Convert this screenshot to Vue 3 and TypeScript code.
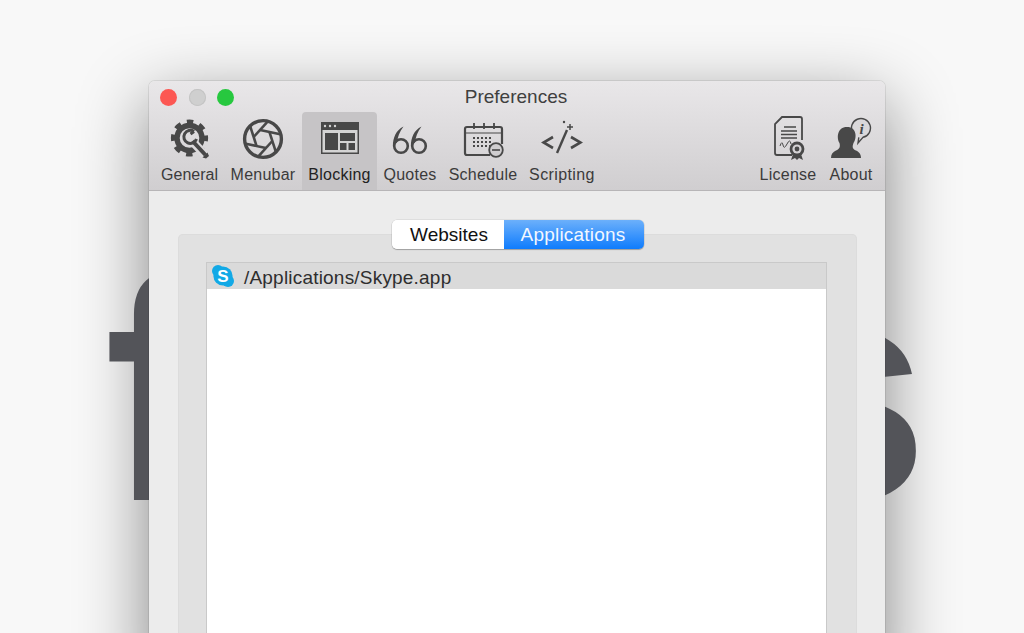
<template>
  <div class="desktop">
    <div class="window-shadow"></div>
    <div class="wordmark">focus</div>

    <div class="window">
      <header class="titlebar">
        <div class="title-row">
          <div class="lights">
            <span class="light red"></span>
            <span class="light grey"></span>
            <span class="light green"></span>
          </div>
          <div class="title">Preferences</div>
        </div>

        <nav class="tabs">
          <div class="tab general">
            <svg class="icon" width="44" height="50" viewBox="0 0 44 50">
              <circle cx="21.5" cy="24" r="12.5" fill="none" stroke="#484848" stroke-width="5.4" />
              <circle cx="21.5" cy="24" r="16.5" fill="none" stroke="#484848" stroke-width="4.2" stroke-dasharray="6.5 6.46" stroke-dashoffset="3.2" />
              <path d="M25 28 L39 43" stroke="#dcdadc" stroke-width="8.5" />
              <path d="M24.5 27 L37.5 41" stroke="#484848" stroke-width="4" />
              <path d="M26 17.5 L22.5 20 M26 17.5 A6.5 6.5 0 1 0 28.5 25" fill="none" stroke="#484848" stroke-width="3" />
              <path d="M39.5 38.5 L41 42 L38 44.5 L34.5 43.5 L37 41Z" fill="#484848" />
            </svg>
            <span>General</span>
          </div>

          <div class="tab menubar">
            <svg class="icon" width="44" height="50" viewBox="0 0 44 50">
              <circle cx="22" cy="25" r="18.4" fill="none" stroke="#484848" stroke-width="3.4" />
              <path v-for="(d, i) in apertureBlades" :key="i" :d="d" stroke="#484848" stroke-width="2.6" fill="none" />
            </svg>
            <span>Menubar</span>
          </div>

          <div class="tab blocking active">
            <svg class="icon" width="40" height="50" viewBox="0 0 40 50">
              <rect x="1" y="8" width="38" height="32" fill="#484848" />
              <rect x="2.5" y="16" width="35" height="22.5" fill="#d4d4d4" />
              <rect x="5" y="19" width="13" height="17" fill="#484848" />
              <rect x="20" y="19" width="15" height="8" fill="#484848" />
              <rect x="20" y="29" width="6.5" height="7" fill="#484848" />
              <rect x="28.5" y="29" width="6.5" height="7" fill="#484848" />
              <circle cx="5" cy="12" r="1.2" fill="#d4d4d4" />
              <circle cx="10" cy="12" r="1.2" fill="#d4d4d4" />
              <circle cx="15" cy="12" r="1.2" fill="#d4d4d4" />
            </svg>
            <span>Blocking</span>
          </div>

          <div class="tab quotes">
            <svg class="icon" width="38" height="50" viewBox="0 0 38 50">
              <circle cx="10" cy="32" r="6.8" fill="none" stroke="#484848" stroke-width="2.6" />
              <path d="M1.9 32 C1.9 24 5 16 12.5 12.5 C8.5 18 6.4 23 6.4 28Z" fill="#484848" />
              <circle cx="28" cy="32" r="6.8" fill="none" stroke="#484848" stroke-width="2.6" />
              <path d="M19.9 32 C19.9 24 23 16 30.5 12.5 C26.5 18 24.4 23 24.4 28Z" fill="#484848" />
            </svg>
            <span>Quotes</span>
          </div>

          <div class="tab schedule">
            <svg class="icon" width="42" height="50" viewBox="0 0 42 50">
              <path d="M28 41 H5 Q3 41 3 39 V15 Q3 13 5 13 H38 Q40 13 40 15 V30" fill="none" stroke="#484848" stroke-width="2.2" />
              <path d="M3 19 H40" stroke="#484848" stroke-width="1.2" />
              <path d="M12 9 V15 M22 9 V15 M32 9 V15" stroke="#484848" stroke-width="1.8" />
              <g fill="#484848">
                <template v-for="y in [23, 27, 31]" :key="y">
                  <rect v-for="x in [11, 15, 19, 23, 27]" :key="x" :x="x" :y="y" width="2" height="2" />
                </template>
              </g>
              <circle cx="34" cy="36" r="6.8" fill="#cfcdcf" stroke="#484848" stroke-width="1.8" />
              <path d="M30 36 H38" stroke="#484848" stroke-width="1.6" />
            </svg>
            <span>Schedule</span>
          </div>

          <div class="tab scripting">
            <svg class="icon" width="42" height="50" viewBox="0 0 42 50">
              <path d="M12 23 L2.5 28.5 L12 34 M30 23 L39.5 28.5 L30 34" fill="none" stroke="#484848" stroke-width="2.6" />
              <path d="M26 16 L16 39" stroke="#484848" stroke-width="2.4" />
              <path d="M29 10 V16 M26 13 H32" stroke="#484848" stroke-width="1.5" />
              <circle cx="23" cy="8" r="1.2" fill="#484848" />
            </svg>
            <span>Scripting</span>
          </div>

          <div class="tab license">
            <svg class="icon" width="36" height="50" viewBox="0 0 36 50">
              <path d="M22 41 H7 Q5 41 5 39 V10 L12 3 H30 Q32 3 32 5 V26" fill="none" stroke="#484848" stroke-width="1.8" />
              <path d="M14 13 H26 M11 17 H27 M11 20.5 H27 M11 24 H27" stroke="#484848" stroke-width="1.4" />
              <path d="M10 32 Q12 26 13 31 T17 30 T21 30" fill="none" stroke="#484848" stroke-width="1" />
              <path d="M23 40 L21 46 L25 44 L27 46 L29 44 L33 46 L31 40Z" fill="#484848" />
              <circle cx="27" cy="35" r="7.4" fill="#484848" />
              <circle cx="27" cy="35" r="4.6" fill="#d4d2d4" />
              <circle cx="27" cy="35" r="2.4" fill="#484848" />
            </svg>
            <span>License</span>
          </div>

          <div class="tab about">
            <svg class="icon" width="42" height="50" viewBox="0 0 42 50">
              <path d="M22.6 18.5 A9.5 9.5 0 1 1 33 23.3 L28 29 L28.8 23.3" fill="#dad8da" stroke="#484848" stroke-width="1.4" />
              <path d="M17 13 C7 13 6.5 24 9.5 29 C10.5 33 9.5 35 6 36.5 C3 38 1 40 1 44 H31 C31 40 29 38 26 36.5 C22.5 35 22 33 23.5 29 C27 24 27 13 17 13Z" fill="#484848" />
              <text x="29.5" y="19.5" class="info">i</text>
            </svg>
            <span>About</span>
          </div>
        </nav>
      </header>

      <main class="content">
        <div class="segmented">
          <button class="segment">Websites</button>
          <button class="segment on">Applications</button>
        </div>
        <section class="panel">
          <div class="list">
            <div class="row">
              <svg class="skype" width="24" height="24" viewBox="0 0 24 24">
                <circle cx="12" cy="12" r="9.6" fill="#12a9e6" />
                <circle cx="7" cy="7" r="6" fill="#12a9e6" />
                <circle cx="17" cy="17" r="6" fill="#12a9e6" />
                <text x="12" y="18" class="skype-s">S</text>
              </svg>
              <span>/Applications/Skype.app</span>
            </div>
          </div>
        </section>
      </main>
    </div>
  </div>
</template>

<script setup lang="ts">
// six blades of the shutter, each running along one side of the inner hexagon out to the rim
const apertureBlades: string[] = Array.from({ length: 6 }, (_, k) => {
  const rad = (deg: number) => (deg * Math.PI) / 180
  const a = rad(k * 60 + 12)
  const b = rad(k * 60 + 72)
  const x1 = 22 + 9.5 * Math.cos(a)
  const y1 = 25 + 9.5 * Math.sin(a)
  const x2 = 22 + 9.5 * Math.cos(b)
  const y2 = 25 + 9.5 * Math.sin(b)
  const ex = x2 + (x2 - x1) * 1.3
  const ey = y2 + (y2 - y1) * 1.3
  return `M${x1.toFixed(1)} ${y1.toFixed(1)} L${ex.toFixed(1)} ${ey.toFixed(1)}`
})
</script>

<style>
html,
body {
  margin: 0;
  height: 100%;
  overflow: hidden;
  background: #f8f8f8;
}
</style>

<style scoped>
.desktop {
  position: relative;
  height: 633px;
  overflow: hidden;
  background: #f8f8f8;
  font-family: "Liberation Sans", Arial, sans-serif;
}

/* the big word sits on top of the shadow but under the window */
.window-shadow {
  position: absolute;
  left: 149px;
  top: 81px;
  width: 736px;
  height: 600px;
  border-radius: 6px 6px 0 0;
  box-shadow: 0 22px 70px rgba(0, 0, 0, 0.48);
}

.wordmark {
  position: absolute;
  left: 104px;
  top: 204px;
  font-size: 318px;
  font-weight: 700;
  line-height: 372px;
  letter-spacing: -5.8px;
  color: #535459;
}

.window {
  position: relative;
  width: 736px;
  height: 600px;
  margin: 81px 0 0 149px;
  border-radius: 6px 6px 0 0;
  background: #ececec;
  box-shadow: 0 0 0 1px rgba(0, 0, 0, 0.08);
}

.titlebar {
  height: 110px;
  box-sizing: border-box;
  border-bottom: 1px solid #b7b5b7;
  border-radius: 6px 6px 0 0;
  background: linear-gradient(#e9e7e9, #d0ced0);
}

.title-row {
  display: grid;
  grid-template-columns: 1fr auto 1fr;
  align-items: center;
  height: 31px;
  box-sizing: border-box;
  padding: 1px 11px 0;
}

.lights {
  display: flex;
  gap: 11.5px;
}

.light {
  width: 17px;
  height: 17px;
  border-radius: 50%;
}

.red {
  background: #fc5753;
}

.grey {
  background: #cfcfcf;
  box-shadow: inset 0 0 0 1px #c4c4c4;
}

.green {
  background: #27c83f;
}

.title {
  grid-column: 2;
  position: relative;
  left: -1px;
  font-size: 19px;
  color: #3f3f3f;
}

.tabs {
  display: flex;
  height: 78px;
  padding: 0 6px;
}

.tab {
  display: flex;
  flex-direction: column;
  align-items: center;
  border-radius: 4px 4px 0 0;
  font-size: 16px;
  letter-spacing: 0.25px;
  white-space: nowrap;
  color: #3b3b3b;
}

.general {
  width: 69px;
  letter-spacing: 0;
}

.menubar {
  width: 78px;
}

.blocking {
  width: 75px;
}

.quotes {
  width: 66px;
}

.schedule {
  width: 80px;
}

.scripting {
  width: 78px;
  letter-spacing: 0.4px;
}

.license {
  width: 70px;
  margin-left: auto;
}

.about {
  width: 56px;
}

.tab.active {
  background: #c6c4c6;
  color: #222;
}

.icon {
  display: block;
  margin: 2px 0 2px;
}

.info {
  font-family: "Liberation Serif", serif;
  font-style: italic;
  font-weight: 700;
  font-size: 15px;
  fill: #484848;
}

.content {
  padding-top: 29px;
}

.segmented {
  display: flex;
  width: 252px;
  height: 29px;
  margin: 0 auto -15px;
  position: relative;
  left: 1px;
  box-shadow: 0 1px 1px rgba(0, 0, 0, 0.25), 0 0 0 0.5px rgba(0, 0, 0, 0.12);
  border-radius: 5px;
}

.segment {
  flex: 1 1 auto;
  padding: 0 0 0 2px;
  border: 0;
  font: inherit;
  font-size: 19px;
  background: #fff;
  color: #111;
  border-radius: 5px 0 0 5px;
}

.segment:first-child {
  flex: 0 0 112px;
}

.segment.on {
  padding: 0 2px 0 0;
  letter-spacing: 0.2px;
  color: #f2f7ff;
  background: linear-gradient(#6cb0fb, #0f7cfd);
  border-radius: 0 5px 5px 0;
}

.panel {
  margin: 0 28px 0 29px;
  padding: 28px 30px 28px 28px;
  height: 500px;
  box-sizing: border-box;
  background: #e1e1e1;
  border-radius: 5px;
  box-shadow: inset 0 0 0 1px #dcdcdc;
}

.list {
  height: 460px;
  background: #fff;
  border: 1px solid #c9c9c9;
  border-bottom: 0;
}

.row {
  display: flex;
  align-items: center;
  gap: 9px;
  height: 26px;
  box-sizing: border-box;
  padding: 4px 0 0 4px;
  background: #dadada;
  font-size: 19px;
  letter-spacing: 0.2px;
  color: #2e2e2e;
}

.skype {
  display: block;
  margin-top: -4px;
}

.skype-s {
  font-family: "Liberation Sans", sans-serif;
  font-weight: 700;
  font-size: 17px;
  text-anchor: middle;
  fill: #fff;
}
</style>
